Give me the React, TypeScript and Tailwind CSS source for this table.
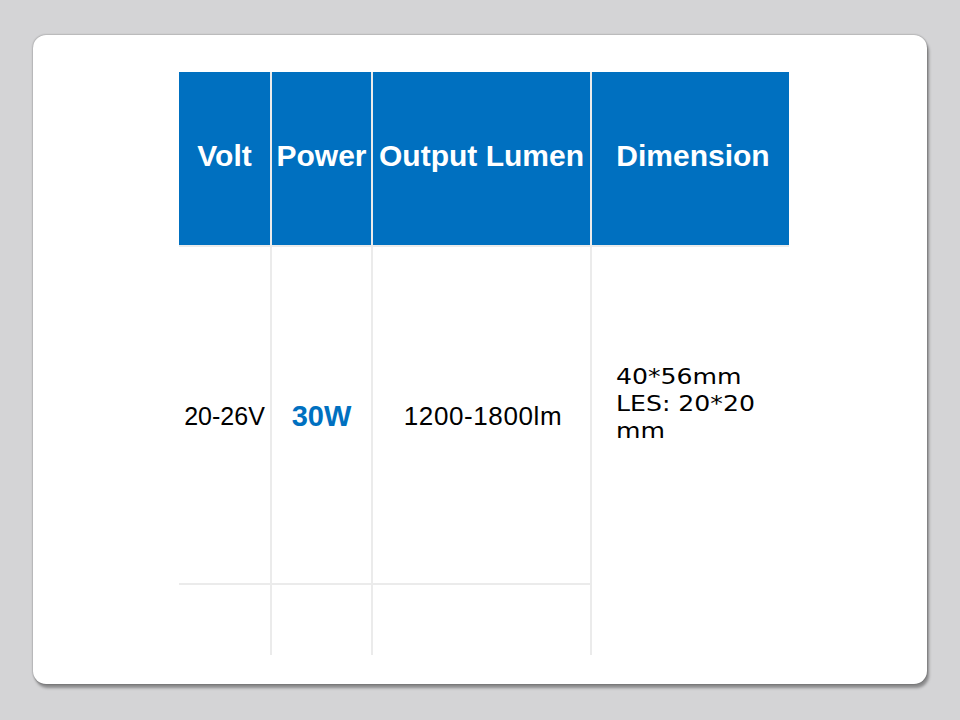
import React from "react";

const arial = { fontFamily: '"Liberation Sans", Arial, sans-serif' };

export default function App() {
  return (
    <div className="min-h-screen w-full bg-[#d4d4d6] pt-[35px] pl-[33px]">
      <div className="w-[894px] h-[649px] rounded-[13px] bg-white shadow-[0_0_2px_rgba(0,0,0,0.45),2px_4px_3px_rgba(0,0,0,0.35)] pt-[37px] pl-[146px]">
        <div
          className="grid w-[610px] grid-cols-[91px_99px_217px_197px] grid-rows-[173px_336px_70px] gap-[2px] bg-[#ebebeb]"
          style={arial}
        >
          <div className="flex items-center justify-center bg-[#0070c0] pb-[6px] text-[30px] font-bold text-white">
            Volt
          </div>
          <div className="flex items-center justify-center bg-[#0070c0] pb-[6px] text-[30px] font-bold text-white">
            Power
          </div>
          <div className="flex items-center justify-center bg-[#0070c0] pb-[6px] text-[30px] font-bold text-white whitespace-nowrap">
            Output Lumen
          </div>
          <div className="flex items-center justify-center bg-[#0070c0] pb-[6px] pl-[5px] text-[30px] font-bold text-white">
            Dimension
          </div>

          <div className="flex items-center justify-center bg-white pt-[3px] text-[25px] text-black">
            20-26V
          </div>
          <div className="flex items-center justify-center bg-white pt-[4px] text-[29px] font-bold text-[#0070c0]">
            30W
          </div>
          <div className="flex items-center justify-center bg-white pt-[3px] pl-[3px] text-[26px] tracking-[0.6px] text-black">
            1200-1800lm
          </div>
          <div className="row-span-2 bg-white pt-[116px] pl-[24px]">
            <div
              className="w-[150px] origin-left scale-x-[1.17] text-[21.5px] leading-[27px] text-black"
              style={{ fontFamily: '"DejaVu Sans", Verdana, sans-serif' }}
            >
              40*56mm LES: 20*20 mm
            </div>
          </div>

          <div className="bg-white"></div>
          <div className="bg-white"></div>
          <div className="bg-white"></div>
        </div>
      </div>
    </div>
  );
}
